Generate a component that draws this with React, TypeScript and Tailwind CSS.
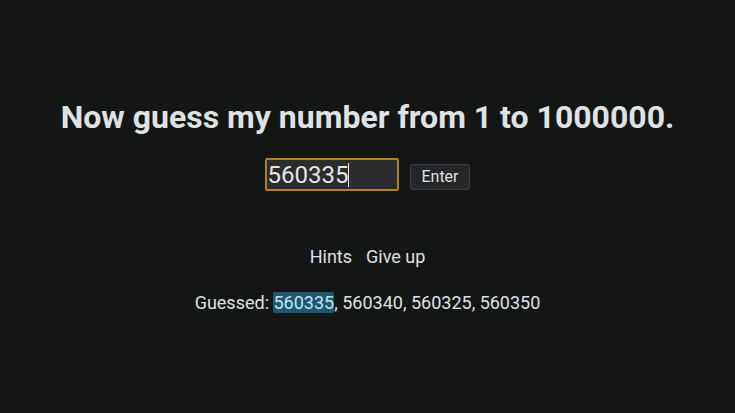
import React from "react";

const App = () => {
  const guesses = ["560335", "560340", "560325", "560350"];

  return (
    <div className="min-h-[413px] w-full bg-[#141616] text-[#dfe1e3] font-['Roboto',sans-serif] flex flex-col items-center pt-[97px]">
      <h1 className="text-[32px] leading-[40px] font-bold">
        Now guess my number from 1 to 1000000.
      </h1>

      <div className="mt-[21px] flex items-center gap-[11px]">
        <div className="w-[134px] h-[33px] border-2 border-[#b07f1e] rounded-[2px] bg-[#2b2c2d] flex items-center px-0">
          <span className="text-[24px] leading-none text-[#e4e6e8]">560335</span>
          <span className="w-px h-[24px] bg-[#e4e6e8]" />
        </div>
        <button className="h-[26px] px-[10px] mt-[5px] rounded-[3px] border border-[#3d3f41] bg-[#232526] text-[16px] leading-none text-[#e0e2e4]">
          Enter
        </button>
      </div>

      <div className="mt-[52px] flex gap-[14px] text-[18px]">
        <span>Hints</span>
        <span>Give up</span>
      </div>

      <p className="mt-[19px] text-[18px]">
        Guessed:{" "}
        {guesses.map((g, i) => (
          <React.Fragment key={g}>
            {i === 0 ? (
              <span className="bg-[#1e5870] rounded-[2px] text-[#bfe4f2]">{g}</span>
            ) : (
              g
            )}
            {i < guesses.length - 1 ? ", " : ""}
          </React.Fragment>
        ))}
      </p>
    </div>
  );
};

export default App;
